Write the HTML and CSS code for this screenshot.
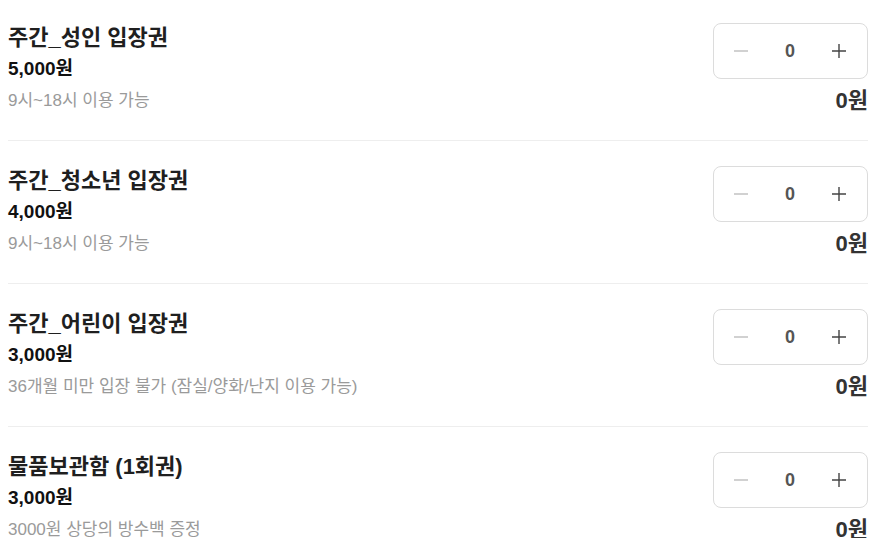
FILE: index.html
```html
<!DOCTYPE html>
<html lang="ko">
<head>
    <meta charset="UTF-8">
    <meta name="viewport" content="width=device-width, initial-scale=1.0">
    <title>입장권 선택</title>
    <link rel="stylesheet" href="styles.css">
</head>
<body>
    <div class="ticketList">
        <div class="ticket">
            <div class="ticketInfo">
                <div class="ticketName">주간_성인 입장권</div>
                <div class="ticketPrice">5,000원</div>
                <div class="ticketDesc">9시~18시 이용 가능</div>
            </div>
            <div class="ticketSide">
                <div class="stepper">
                    <button class="stepBtn minus" type="button"><svg width="16" height="16" viewBox="0 0 16 16"><path d="M1 8h14" stroke="#bdbdbd" stroke-width="1.4"/></svg></button>
                    <span class="count">0</span>
                    <button class="stepBtn plus" type="button"><svg width="16" height="16" viewBox="0 0 16 16"><path d="M1 8h14M8 1v14" stroke="#444" stroke-width="1.4"/></svg></button>
                </div>
                <div class="total">0원</div>
            </div>
        </div>

        <div class="ticket">
            <div class="ticketInfo">
                <div class="ticketName">주간_청소년 입장권</div>
                <div class="ticketPrice">4,000원</div>
                <div class="ticketDesc">9시~18시 이용 가능</div>
            </div>
            <div class="ticketSide">
                <div class="stepper">
                    <button class="stepBtn minus" type="button"><svg width="16" height="16" viewBox="0 0 16 16"><path d="M1 8h14" stroke="#bdbdbd" stroke-width="1.4"/></svg></button>
                    <span class="count">0</span>
                    <button class="stepBtn plus" type="button"><svg width="16" height="16" viewBox="0 0 16 16"><path d="M1 8h14M8 1v14" stroke="#444" stroke-width="1.4"/></svg></button>
                </div>
                <div class="total">0원</div>
            </div>
        </div>

        <div class="ticket">
            <div class="ticketInfo">
                <div class="ticketName">주간_어린이 입장권</div>
                <div class="ticketPrice">3,000원</div>
                <div class="ticketDesc">36개월 미만 입장 불가 (잠실/양화/난지 이용 가능)</div>
            </div>
            <div class="ticketSide">
                <div class="stepper">
                    <button class="stepBtn minus" type="button"><svg width="16" height="16" viewBox="0 0 16 16"><path d="M1 8h14" stroke="#bdbdbd" stroke-width="1.4"/></svg></button>
                    <span class="count">0</span>
                    <button class="stepBtn plus" type="button"><svg width="16" height="16" viewBox="0 0 16 16"><path d="M1 8h14M8 1v14" stroke="#444" stroke-width="1.4"/></svg></button>
                </div>
                <div class="total">0원</div>
            </div>
        </div>

        <div class="ticket">
            <div class="ticketInfo">
                <div class="ticketName">물품보관함 (1회권)</div>
                <div class="ticketPrice">3,000원</div>
                <div class="ticketDesc">3000원 상당의 방수백 증정</div>
            </div>
            <div class="ticketSide">
                <div class="stepper">
                    <button class="stepBtn minus" type="button"><svg width="16" height="16" viewBox="0 0 16 16"><path d="M1 8h14" stroke="#bdbdbd" stroke-width="1.4"/></svg></button>
                    <span class="count">0</span>
                    <button class="stepBtn plus" type="button"><svg width="16" height="16" viewBox="0 0 16 16"><path d="M1 8h14M8 1v14" stroke="#444" stroke-width="1.4"/></svg></button>
                </div>
                <div class="total">0원</div>
            </div>
        </div>
    </div>
</body>
</html>
```

FILE: styles.css
```css
body {
    margin: 0;
    font-family: "Liberation Sans", "Noto Sans CJK KR", sans-serif;
    background-color: #ffffff;
    color: #222;
    overflow: hidden;
}
.ticketList {
    padding: 0 10px 0 8px;
    margin-top: -2px;
}
.ticket {
    display: flex;
    justify-content: space-between;
    align-items: flex-start;
    padding: 25px 0 25px;
    border-bottom: 1px solid #eeeeee;
}
.ticketInfo {
    padding-top: 1px;
}
.ticketName {
    font-size: 22px;
    font-weight: bold;
    line-height: 28px;
    color: #1f1f1f;
}
.ticketPrice {
    font-size: 19px;
    font-weight: bold;
    line-height: 26px;
    margin-top: 4px;
    color: #111;
}
.ticketDesc {
    font-size: 17px;
    line-height: 24px;
    margin-top: 7px;
    color: #9a9a9a;
}
.ticketSide {
    display: flex;
    flex-direction: column;
    align-items: flex-end;
}
.stepper {
    display: flex;
    align-items: center;
    width: 155px;
    height: 56px;
    box-sizing: border-box;
    border: 1px solid #dcdcdc;
    border-radius: 8px;
    padding: 0 4px 0 3px;
}
.stepBtn {
    width: 48px;
    height: 100%;
    border: none;
    background: transparent;
    padding: 0;
    display: flex;
    align-items: center;
    justify-content: center;
    cursor: pointer;
}
.count {
    flex: 1;
    text-align: center;
    font-size: 18px;
    font-weight: bold;
    color: #555;
}
.total {
    margin-top: 8px;
    font-size: 22px;
    font-weight: bold;
    line-height: 28px;
    color: #333;
}
```
